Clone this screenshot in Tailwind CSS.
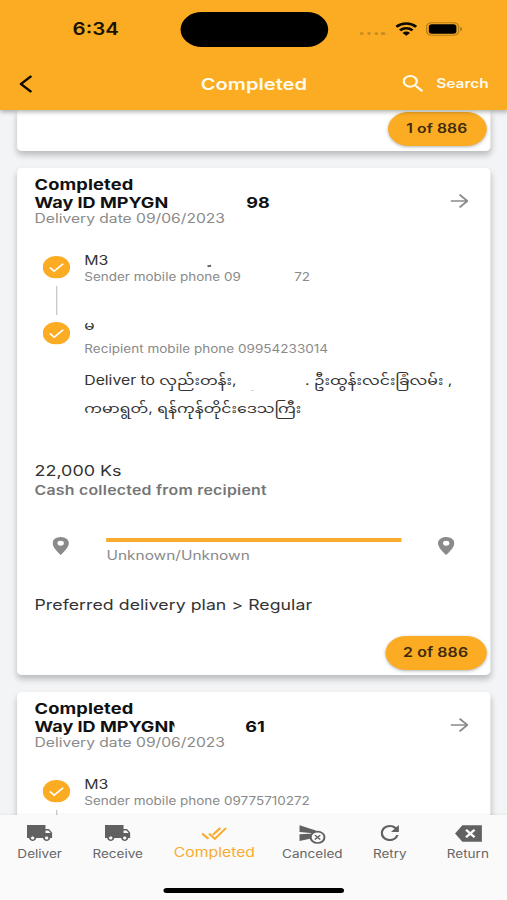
<!DOCTYPE html>
<html lang="en">
<head>
<meta charset="utf-8">
<title>Completed</title>
<script src="https://cdn.jsdelivr.net/npm/@tailwindcss/browser@4"></script>
</head>
<body class="overflow-hidden w-[507px] h-[900px] bg-[#f2f4f6]">
<svg class="hidden">
  <symbol id="check" viewBox="0 0 24 24"><circle cx="12" cy="12" r="12" fill="#fbac23"/><path d="M6.300 12.300l3.700 3.900 7.900-8" fill="none" stroke="#fff" stroke-width="1.700"/></symbol>
  <symbol id="arrow" viewBox="0 0 16 16"><path d="M.5 8h14M8.200 1.200L15 8l-6.800 6.800" fill="none" stroke="#8a8a8a" stroke-width="1.800"/></symbol>
  <symbol id="pin" viewBox="5 2 14 20" preserveAspectRatio="none"><path d="M12 2C8.130 2 5 5.130 5 9c0 5.250 7 13 7 13s7-7.750 7-13c0-3.870-3.130-7-7-7zm0 9.700a2.700 2.700 0 0 1 0-5.400 2.700 2.700 0 0 1 0 5.400z" fill="#8a8a8a"/></symbol>
  <symbol id="truck" viewBox="1 4 22 16" preserveAspectRatio="none"><path d="M20 8h-3V4H1v13h2c0 1.660 1.340 3 3 3s3-1.340 3-3h6c0 1.660 1.340 3 3 3s3-1.340 3-3h2v-5l-3-4zM6 18.500c-.83 0-1.500-.67-1.500-1.500s.67-1.500 1.500-1.500 1.500.67 1.500 1.500-.67 1.500-1.500 1.500zm13.500-9l1.960 2.500H17V9.500h2.500zm-1.500 9c-.83 0-1.500-.67-1.500-1.500s.67-1.500 1.500-1.500 1.500.67 1.500 1.500-.67 1.500-1.500 1.500z" fill="#616161"/></symbol>
</svg>
<div class="relative flex flex-col w-[415.57px] h-[900px] origin-top-left scale-x-[1.22] font-['Inter','Noto_Sans_Myanmar','Noto_Sans',sans-serif] text-[#333] whitespace-nowrap">

  <header class="relative z-10 shrink-0 h-[110px] bg-[#fbac23] shadow-[0_2px_4px_rgba(0,0,0,0.3)]">
    <div class="flex items-center h-[59px] pl-[59.500px]">
      <span class="w-[88px] pt-px text-[16.800px] font-semibold text-[#1a1200]">6:34</span>
      <div class="w-[121.300px] h-[35px] rounded-full bg-black"></div>
      <div class="flex gap-[2.600px] ml-[26px] mt-[8px]">
        <i class="size-[3.300px] rounded-full bg-[#c98d22]"></i><i class="size-[3.300px] rounded-full bg-[#c98d22]"></i><i class="size-[3.300px] rounded-full bg-[#c98d22]"></i><i class="size-[3.300px] rounded-full bg-[#c98d22]"></i>
      </div>
      <svg class="ml-[7.800px] mb-[2px] w-[18px] h-[14px]" viewBox="0 0 18 14" fill="none" stroke="#100b00" stroke-width="2.500"><path d="M.9 4.900a11.600 11.600 0 0 1 16.200 0M3.900 8.400a7.300 7.300 0 0 1 10.200 0"/><path d="M9 13.800L5.900 10.900a4.400 4.400 0 0 1 6.200 0z" fill="#100b00" stroke="none"/></svg>
      <svg class="ml-[7.500px] mb-[2px] w-[31px] h-[14px]" viewBox="0 0 31 14"><rect x=".7" y=".7" width="26.200" height="12.600" rx="4" fill="none" stroke="#b57d1a" stroke-width="1.100"/><rect x="2.500" y="2.300" width="22.600" height="9.400" rx="2.500" fill="#000"/><path d="M28.300 4.800c2 .8 2 3.600 0 4.400z" fill="#a87417"/></svg>
    </div>
    <div class="flex items-center h-[50px] pl-[16px] text-[#fffaeb]">
      <svg class="w-[12px] h-[20px]" viewBox="0 0 12 20"><path d="M9.700 2L1.200 10l8.500 8" fill="none" stroke="#120c00" stroke-width="2.300"/></svg>
      <span class="ml-[136.500px] w-[165.500px] pt-px text-[16.500px] font-semibold">Completed</span>
      <svg class="w-[17px] h-[17px] mb-[2px]" viewBox="3 3 17.500 17.500" fill="#fffaeb"><path d="M15.500 14h-.79l-.28-.27A6.471 6.471 0 0 0 16 9.500 6.500 6.500 0 1 0 9.500 16c1.610 0 3.090-.59 4.230-1.570l.27.28v.79l5 4.990L20.490 19l-4.990-5zm-6 0C7.010 14 5 11.990 5 9.500S7.010 5 9.500 5 14 7.010 14 9.500 11.990 14 9.500 14z"/></svg>
      <span class="ml-[10.500px] text-[12.700px] font-semibold">Search</span>
    </div>
  </header>

  <main class="flex-1 min-h-0 overflow-hidden flex flex-col gap-[17px] px-[13.500px]">
    <section class="shrink-0 flex flex-col items-end h-[41px] rounded-b-[4px] bg-white pt-[2px] pr-[3.500px] shadow-[0_4px_6px_rgba(0,0,0,0.24)]">
      <span class="flex items-center justify-center w-[81px] h-[34px] rounded-full bg-[#fbac23] text-[12.800px] tracking-[0.100px] font-semibold text-[#3d2a08] shadow-[0_1px_3px_rgba(0,0,0,0.3)]">1 of 886</span>
    </section>

    <section class="shrink-0 flex flex-col h-[507px] rounded-[4px] bg-white pt-[7px] pl-[14.800px] shadow-[0_4px_6px_rgba(0,0,0,0.24)]">
      <div class="flex items-center h-[52px]">
        <div class="w-[340.500px]">
          <p class="text-[15px] leading-[18px] tracking-[0.1px] font-bold text-[#111]">Completed</p>
          <p class="flex text-[14.800px] leading-[18px] font-bold text-[#111]"><span class="w-[173.500px]">Way ID MPYGN</span><span>98</span></p>
          <p class="text-[12.800px] leading-[14px] text-[#8a8a8a]">Delivery date 09/06/2023</p>
        </div>
        <svg class="w-[15px] h-[16px] mb-[1px]"><use href="#arrow"/></svg>
      </div>
      <div class="flex mt-[24px] pl-[7px] gap-[11.300px]">
        <div class="flex flex-col items-center pt-[5px]">
          <svg class="size-[22.500px]"><use href="#check"/></svg>
          <i class="w-px h-[29px] my-[7.300px] bg-[#c4c4c4]"></i>
          <svg class="size-[22.500px]"><use href="#check"/></svg>
        </div>
        <div>
          <p class="flex h-[18px] text-[13px] leading-[18px]"><span class="w-[101px]">M3</span><i class="w-[3px] h-[1.500px] mt-[14px] bg-[#666] -rotate-12"></i></p>
          <p class="flex h-[16px] text-[11.050px] leading-[17px] text-[#8a8a8a]"><span class="w-[172px]">Sender mobile phone 09</span><span>72</span></p>
          <p class="h-[20px] mt-[31px] text-[12.500px] leading-[20px]">မ</p>
          <p class="h-[16px] mt-[5px] text-[11.100px] leading-[17px] text-[#8a8a8a]">Recipient mobile phone 09954233014</p>
          <p class="flex h-[28px] mt-[9.500px] text-[12.900px] leading-[28px]"><span class="w-[137px]">Deliver to လှည်းတန်း,</span><i class="w-[2px] h-px mt-[23px] mr-[42px] bg-[#ccc]"></i><span>. ဦးထွန်းလင်းခြံလမ်း ,</span></p>
          <p class="h-[28px] text-[12.900px] leading-[28px]">ကမာရွတ်, ရန်ကုန်တိုင်းဒေသကြီး</p>
        </div>
      </div>
      <p class="mt-[38.500px] text-[14.700px] leading-[20px]">22,000 Ks</p>
      <p class="text-[13px] leading-[18px] tracking-[0.200px] font-semibold text-[#757575]">Cash collected from recipient</p>
      <div class="flex items-center mt-[29px] h-[36px]">
        <svg class="ml-[15.200px] w-[13.500px] h-[18px] mb-px"><use href="#pin"/></svg>
        <div class="ml-[30.300px] w-[242px] mr-[30px] pt-[11px]">
          <div class="h-[4px] bg-[#f9ab2d]"></div>
          <p class="mt-[5px] text-[12.650px] leading-[18px] text-[#8a8a8a]">Unknown/Unknown</p>
        </div>
        <svg class="w-[13.500px] h-[18px] mb-px"><use href="#pin"/></svg>
      </div>
      <p class="mt-[31px] text-[14.500px] leading-[20px] tracking-[0.040px]">Preferred delivery plan &gt; Regular</p>
      <span class="self-end mt-auto mr-[3.500px] mb-[5px] flex items-center justify-center w-[83px] h-[34px] rounded-full bg-[#fbac23] text-[13px] tracking-[0.1px] font-semibold text-[#3d2a08] shadow-[0_1px_3px_rgba(0,0,0,0.3)]">2 of 886</span>
    </section>

    <section class="shrink-0 flex flex-col h-[507px] rounded-[4px] bg-white pt-[7px] pl-[14.800px] shadow-[0_4px_6px_rgba(0,0,0,0.24)]">
      <div class="flex items-center h-[52px]">
        <div class="w-[340.500px]">
          <p class="text-[15px] leading-[18px] tracking-[0.1px] font-bold text-[#111]">Completed</p>
          <p class="flex text-[14.800px] leading-[18px] font-bold text-[#111]"><span class="w-[114.300px]">Way ID MPYGNN</span><span class="relative pl-[58.500px] bg-white">61</span></p>
          <p class="text-[12.800px] leading-[14px] text-[#8a8a8a]">Delivery date 09/06/2023</p>
        </div>
        <svg class="w-[15px] h-[16px] mb-[1px]"><use href="#arrow"/></svg>
      </div>
      <div class="flex mt-[24px] pl-[7px] gap-[11.300px]">
        <div class="flex flex-col items-center pt-[5px]">
          <svg class="size-[22.500px]"><use href="#check"/></svg>
          <i class="w-px h-[29px] my-[7.300px] bg-[#c4c4c4]"></i>
        </div>
        <div>
          <p class="text-[13px] leading-[18px]">M3</p>
          <p class="text-[11.050px] leading-[17px] text-[#8a8a8a]">Sender mobile phone 09775710272</p>
        </div>
      </div>
    </section>
  </main>

  <nav class="relative z-10 shrink-0 flex flex-col items-center h-[85px] bg-[#fafafa] text-[11.100px] text-[#666] shadow-[0_-1px_2px_rgba(0,0,0,0.05)]">
    <div class="flex w-full h-[73px] pt-[10px]">
      <div class="w-[64px] pl-px flex flex-col items-center"><svg class="w-[21px] h-[16px]"><use href="#truck"/></svg><span class="mt-[4.500px] leading-[16px]">Deliver</span></div>
      <div class="w-[64px] pl-px flex flex-col items-center"><svg class="w-[21px] h-[16px]"><use href="#truck"/></svg><span class="mt-[4.500px] leading-[16px]">Receive</span></div>
      <div class="w-[95.500px] flex flex-col items-center text-[#f9ab2d]">
        <svg class="mt-[2px] w-[21px] h-[13px]" viewBox="0 0 21 13" fill="none" stroke="#f9ab2d" stroke-width="1.900"><path d="M.7 6.500l5.200 5.300M9.500 7.800L15.500 1M6.300 6.700l4.800 5.100L20.300 1"/></svg>
        <span class="mt-[5px] text-[12.900px] leading-[16px]">Completed</span></div>
      <div class="w-[64px] pl-px flex flex-col items-center">
        <svg class="w-[22px] h-[20px]" viewBox="0 0 22 20"><path d="M.5 .3L14 5.500V8.500L.5 7zM.5 9.300L12 8.500v4.500L.5 16z" fill="#616161"/><circle cx="15.300" cy="12.300" r="5.700" fill="#fafafa" stroke="#616161" stroke-width="1.700"/><path d="M13.100 10.100l4.400 4.400m0-4.400l-4.400 4.400" stroke="#616161" stroke-width="1.200"/></svg>
        <span class="mt-[0.500px] leading-[16px]">Canceled</span></div>
      <div class="w-[64px] flex flex-col items-center"><svg class="w-[15px] h-[16px]" viewBox="4 4 16 16" preserveAspectRatio="none"><path d="M17.650 6.350A7.958 7.958 0 0 0 12 4a8 8 0 1 0 7.730 10h-2.080A5.990 5.990 0 0 1 12 18a6 6 0 1 1 0-12c1.660 0 3.140.69 4.220 1.780L13 11h7V4l-2.350 2.350z" fill="#616161"/></svg><span class="mt-[4.500px] leading-[16px]">Retry</span></div>
      <div class="w-[64px] flex flex-col items-center"><svg class="w-[22px] h-[17px]" viewBox="0 0 22 17"><path d="M6 .3h16v16.400H6L0 8.500z" fill="#616161"/><path d="M9 4.800l7 7.400m0-7.400l-7 7.400" stroke="#fafafa" stroke-width="2"/></svg><span class="mt-[3.500px] leading-[16px]">Return</span></div>
    </div>
    <div class="w-[148px] h-[5px] mt-[-0.500px] rounded-full bg-black"></div>
  </nav>
</div>
</body>
</html>
